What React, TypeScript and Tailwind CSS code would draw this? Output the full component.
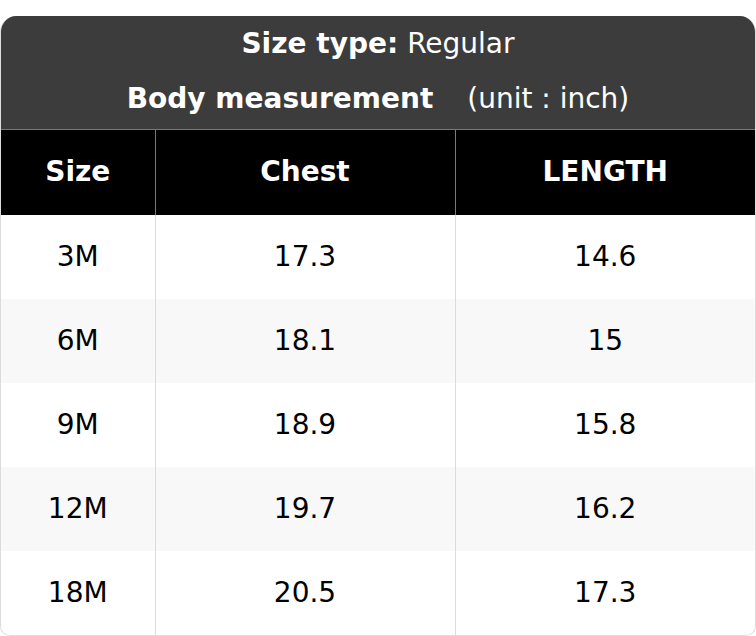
const rows = [
  { size: "3M", chest: "17.3", length: "14.6" },
  { size: "6M", chest: "18.1", length: "15" },
  { size: "9M", chest: "18.9", length: "15.8" },
  { size: "12M", chest: "19.7", length: "16.2" },
  { size: "18M", chest: "20.5", length: "17.3" },
];

export default function App() {
  return (
    <div className="min-h-screen bg-white pt-4 font-['DejaVu_Sans',sans-serif] text-[28px]">
      <div className="overflow-hidden rounded-t-[16px] rounded-b-[10px] border border-[#dcdcdc] border-t-0">
        <div className="bg-[#3c3c3c] text-white">
          <div className="flex h-[56px] items-center justify-center">
            <span className="font-bold">Size type:</span>
            <span className="ml-[9px]">Regular</span>
          </div>
          <div className="flex h-[57px] items-center justify-center pb-[3px]">
            <span className="font-bold">Body measurement</span>
            <span className="ml-[34px]">(unit : inch)</span>
          </div>
        </div>
        <table className="w-full table-fixed border-collapse">
          <colgroup>
            <col className="w-[154px]" />
            <col className="w-[300px]" />
            <col />
          </colgroup>
          <thead>
            <tr className="h-[85px] border-t border-[#7a7a7a] bg-black text-white">
              <th className="border-r border-[#7a7a7a] font-bold">Size</th>
              <th className="border-r border-[#7a7a7a] font-bold">Chest</th>
              <th className="font-bold">LENGTH</th>
            </tr>
          </thead>
          <tbody className="text-black">
            {rows.map((r, i) => (
              <tr key={r.size} className={`h-[84px] ${i % 2 === 1 ? "bg-[#f8f8f8]" : "bg-white"}`}>
                <td className="border-r border-[#dcdcdc] text-center">{r.size}</td>
                <td className="border-r border-[#dcdcdc] text-center">{r.chest}</td>
                <td className="text-center">{r.length}</td>
              </tr>
            ))}
          </tbody>
        </table>
      </div>
    </div>
  );
}
